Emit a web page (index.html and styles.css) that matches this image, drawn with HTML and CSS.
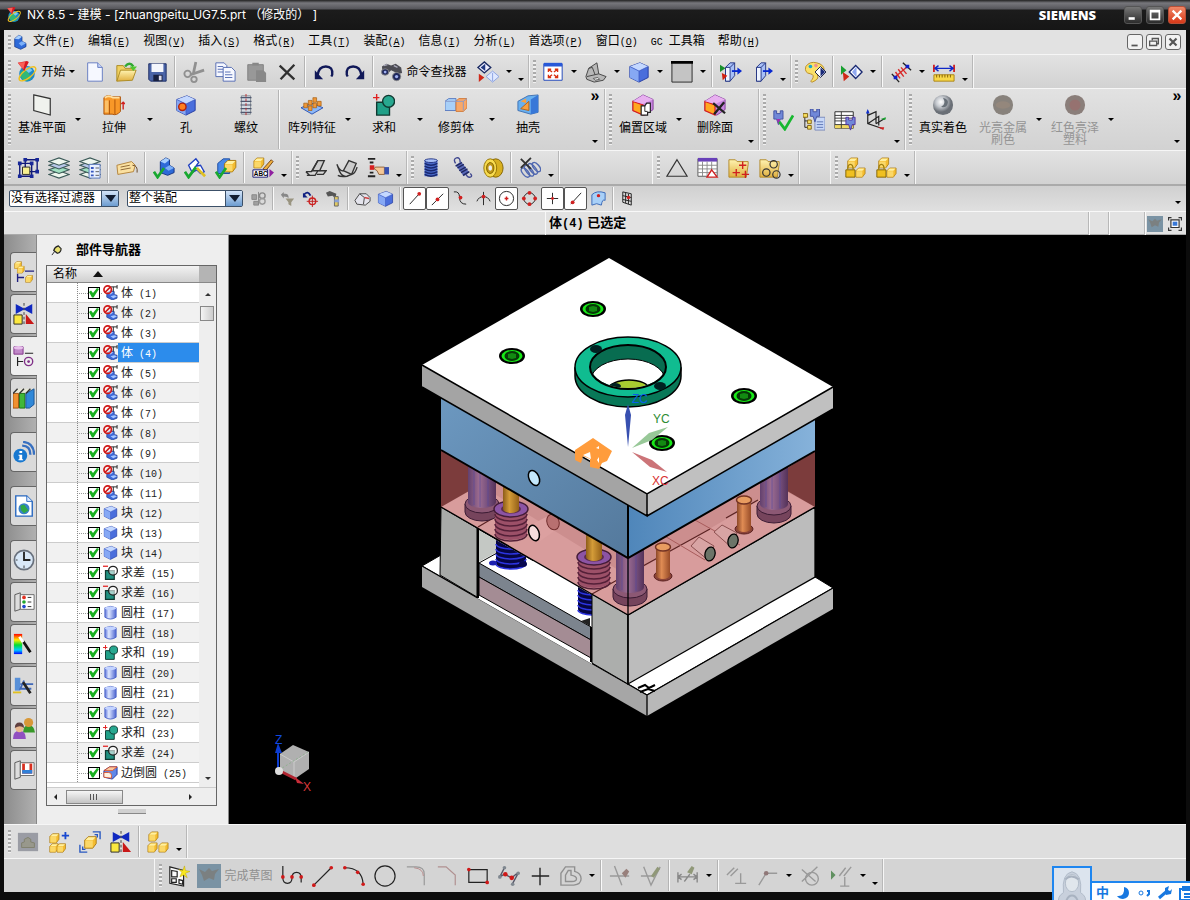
FILE: index.html
```html
<!DOCTYPE html>
<html lang="zh-CN">
<head>
  <meta charset="UTF-8">
  <title>NX 8.5 - 建模</title>
  <meta name="viewport" content="width=device-width, initial-scale=1">
  <link rel="stylesheet" href="styles.css">
</head>
<body>
  <!-- icon sprite -->
  <svg class="sprite" aria-hidden="true">
    <defs>
      <linearGradient id="gBlue" x2="1" y2="1"><stop stop-color="#c8dcff"/><stop offset="1" stop-color="#3c62d8"/></linearGradient>
      <linearGradient id="gCyl"><stop stop-color="#5a72dc"/><stop offset=".35" stop-color="#dfe8ff"/><stop offset="1" stop-color="#4a62d0"/></linearGradient>
      <linearGradient id="gFold" x2="0" y2="1"><stop stop-color="#fff3b0"/><stop offset="1" stop-color="#e0b040"/></linearGradient>
      <radialGradient id="gBall" cx=".4" cy=".35"><stop stop-color="#fff"/><stop offset=".5" stop-color="#c4c8ce"/><stop offset="1" stop-color="#6a6f76"/></radialGradient>
      <linearGradient id="gRain" x2="0" y2="1"><stop stop-color="#f00"/><stop offset=".3" stop-color="#fe0"/><stop offset=".55" stop-color="#0d3"/><stop offset=".8" stop-color="#0cf"/><stop offset="1" stop-color="#00f"/></linearGradient>
    </defs>
    <symbol id="cy" viewBox="0 0 12 12"><path d="M1 4 4 1h7v6L8 11H1z" fill="#f4bc30" stroke="#a87810" stroke-width=".8"/><path d="M1.500 4 4 1.500h6.500L8 4z" fill="#fff0a0"/><path d="M1.500 4.500H8v6H1.500z" fill="#fbd868"/></symbol>
    <symbol id="cb" viewBox="0 0 24 24"><path d="M2 6 13 2l9 4v12l-10 5-10-5z" fill="#4a6edc" stroke="#2038a0"/><path d="M2 6 13 2l9 4-10 5z" fill="#c4d8ff"/><path d="M2 6l10 5v12L2 18z" fill="#86a8f4"/><path d="M2 6l10 5 10-5M12 11v12" fill="none" stroke="#3a56c0" stroke-width=".8"/></symbol>
    <symbol id="nx" viewBox="0 0 24 24"><circle cx="12" cy="14" r="8.500" fill="#1c8ac8"/><path d="M5 12q5-4 8 0t3 8q-8 4-11-3z" fill="#30b878"/><path d="M8 8q6-3 10 2l-4 3z" fill="#7ac8f0"/><ellipse cx="12.500" cy="14" rx="11" ry="4.500" fill="none" stroke="#f0c020" stroke-width="1.500" transform="rotate(-38 12.500 14)"/><path d="M2 2l10-2 2 1-5 10z" fill="#d81820"/><path d="M2 2l8-1-2 8z" fill="#f86058"/></symbol>
    <symbol id="part" viewBox="0 0 24 24"><path d="M4 7 10 2l5 2v7l6 3v5l-8 4-9-4z" fill="#2e6ad8" stroke="#103080"/><path d="M4 7l6-5 5 2-5 4z" fill="#a8d0ff"/><path d="M10 14l5-3 6 3-7 4z" fill="#7cb0f8"/></symbol>
    <symbol id="new" viewBox="0 0 24 24"><path d="M4 2h11l5 5v15H4z" fill="#f6f8ff" stroke="#6078c0"/><path d="M15 2v5h5" fill="#c8d4f8" stroke="#6078c0"/></symbol>
    <symbol id="open" viewBox="0 0 24 24"><path d="M2 22V5h7l2 3h9v4" fill="#f0d060" stroke="#a88820"/><path d="M2 22l4-12h17l-4 11z" fill="url(#gFold)" stroke="#a88820"/><path d="M11 6q5-6 9 0" fill="none" stroke="#30a830" stroke-width="2.500"/><path d="M16 6h8l-4 5z" fill="#50c830"/></symbol>
    <symbol id="save" viewBox="0 0 24 24"><path d="M3 3h19v19H5l-2-2z" fill="#4a64a8" stroke="#1a2a60"/><path d="M6 3h13v9H6z" fill="#f4f6fc"/><path d="M8 15h10v7H8z" fill="#182040"/><path d="M14 16h3v5h-3z" fill="#dde"/></symbol>
    <symbol id="cut" viewBox="0 0 24 24"><g fill="none" stroke="#909090" stroke-width="2"><path d="M14 1l-3 14M23 10 8 15" stroke-width="3"/><circle cx="5" cy="14" r="3.500"/><circle cx="12" cy="20" r="3"/></g></symbol>
    <symbol id="copy" viewBox="0 0 24 24"><g fill="#f6f8ff" stroke="#5068b0"><path d="M2 2h9l3 3v12H2z"/><path d="M4 6h6m-6 3h8m-8 3h8"/><path d="M10 7h9l4 4v11H10z"/><path d="M12 12h6m-6 3h8m-8 3h8"/></g></symbol>
    <symbol id="paste" viewBox="0 0 24 24"><path d="M3 4h17v17H3z" fill="#989898" stroke="#808080"/><path d="M8 5V2h7v3zM12 10h8l3 3v10H12z" fill="#888"/></symbol>
    <symbol id="del" viewBox="0 0 24 24"><path d="M4 5l16 15M20 4 5 20" stroke="#303030" stroke-width="2.500"/></symbol>
    <symbol id="undo" viewBox="0 0 24 24"><path d="M5 16Q6 6 14 6t7 9l-1 2" fill="none" stroke="#101858" stroke-width="2.500"/><path d="M2 10v10h9z" fill="#101858"/></symbol>
    <symbol id="redo" viewBox="0 0 24 24"><path d="M19 16Q18 6 10 6t-7 9l1 2" fill="none" stroke="#101858" stroke-width="2.500"/><path d="M22 10v10h-9z" fill="#101858"/></symbol>
    <symbol id="find" viewBox="0 0 24 24"><path d="M1 6l5-3 5 2 5-2 6 4 1 6-3 1-5-2-4-2-3 3-6 1z" fill="#4c4c54"/><path d="M3 5l4-1M14 5l4 2" stroke="#aab" stroke-width="1.500"/><ellipse cx="4.500" cy="12" rx="4" ry="3.500" fill="#20285c" stroke="#888"/><circle cx="17" cy="17" r="4.500" fill="#20285c" stroke="#888"/><circle cx="17" cy="17" r="1.800" fill="#a0b0f0"/><circle cx="4.500" cy="12" r="1.500" fill="#a0b0f0"/></symbol>
    <symbol id="diam" viewBox="0 0 24 24"><path d="M1 7l7-6 7 6-7 6z" fill="#eef" stroke="#182860" stroke-width="1.500"/><path d="M9 3v8L4 7z" fill="#203880"/><path d="M2 14v9l6-5z" fill="#d02818"/><path d="M10 17l7-6 7 6-7 6z" fill="#dfe8ff" stroke="#88a0e0"/><path d="M17 13v9" stroke="#88a0e0"/></symbol>
    <symbol id="fit" viewBox="0 0 24 24"><path d="M2 3h20v18H2z" fill="#fff" stroke="#1840b8"/><path d="M2 2h20v4H2z" fill="#2858d8"/><path d="M7 12V9h3M14 9h3v3M7 15v3h3M17 15v3h-3M7 9l4 3M17 9l-4 3M7 18l4-3M17 18l-4-3" fill="none" stroke="#d83010" stroke-width="1.500"/></symbol>
    <symbol id="wire" viewBox="0 0 24 24"><path d="M1 17 4 8l9-6 2 12 8 3-3 4-10 2-8-3z" fill="#b8b8b8" stroke="#404040"/><path d="M2 17l13-3M4 8l4-1 3 8" fill="none" stroke="#404040"/><path d="M9 19l5-1 2 2-5 1z" fill="#eee" stroke="#555"/></symbol>
    <symbol id="box" viewBox="0 0 24 24"><path d="M1 1h22v22H1z" fill="#c4c4c4" stroke="#222"/><path d="M0 0h24v3H0z" fill="#000"/></symbol>
    <symbol id="exit1" viewBox="0 0 24 24"><path d="M6 7l5-5h5v14l-5 6H6z" fill="#a8c0f8" stroke="#203080"/><path d="M6 7h5v15H6z" fill="#eef4ff" stroke="#203080"/><path d="M11 7l5-5" stroke="#203080"/><path d="M13 11h7" stroke="#0828d0" stroke-width="2"/><path d="M19 7l5 4-5 4z" fill="#0828d0"/></symbol>
    <symbol id="exit2" viewBox="0 0 24 24"><use href="#exit1"/><path d="M0 4l6 4-6 4z" fill="#18902c"/><path d="M2 13l6 3-5 5z" fill="#d02010"/></symbol>
    <symbol id="palette" viewBox="0 0 24 24"><path d="M2 6q4-6 12-4t8 8q-2 4-7 3-1 1 0 4t-6 6q-3 0 0-3 3-5-2-6Q0 13 2 6z" fill="#fae068" stroke="#b88820"/><circle cx="7" cy="6" r="2" fill="#18a8d0"/><circle cx="13" cy="5" r="2" fill="#f09090"/><path d="M12 12l6-6 6 6-6 6z" fill="#fff" stroke="#101840"/><path d="M18 7v10l5-5z" fill="#182878"/></symbol>
    <symbol id="play" viewBox="0 0 24 24"><path d="M0 5l6 5-6 5z" fill="#18a030"/><path d="M2 12l7 5-6 5z" fill="#d02818"/><path d="M9 12l7-7 7 7-7 7z" fill="#fff" stroke="#182870" stroke-width="1.500"/><path d="M17 6v12l-5-6z" fill="#90a8f0"/></symbol>
    <symbol id="meas" viewBox="0 0 24 24"><path d="M2 14l8 9M14 2l9 8" stroke="#222" stroke-width="1.500"/><path d="M5 18 19 6M6 12l5 7M9 9l6 8M12 7l6 7" stroke="#d82828" stroke-width="1.500"/><path d="M4 16h4v4H4zM17 4h4v4h-4z" fill="#1020c8"/></symbol>
    <symbol id="ruler" viewBox="0 0 24 24"><path d="M1 4v8M23 4v8" stroke="#d02020" stroke-width="2"/><path d="M2 8h20M6 5 2 8l4 3M18 5l4 3-4 3" fill="none" stroke="#1028c8" stroke-width="1.500"/><path d="M1 15h22v7H1z" fill="#f8d848" stroke="#a88010"/><path d="M4 15v3m3-3v3m3-3v3m3-3v3m3-3v3m3-3v3" stroke="#805c00"/></symbol>
    <!-- feature row -->
    <symbol id="plane" viewBox="0 0 24 24"><path d="M3 1l18 4v18L3 18z" fill="#f0f2ee" stroke="#333" stroke-width="1.300"/></symbol>
    <symbol id="extr" viewBox="0 0 24 24"><path d="M1 4q4-4 9-1h9v16q-4 5-9 3H1z" fill="#f89828" stroke="#a85008"/><path d="M7 7v15M13 6v16" stroke="#a85008"/><path d="M2 4q4-3 9 0h7" fill="none" stroke="#ffe0a0" stroke-width="2"/><path d="M2 7h4v13H2z" fill="#fcc068"/><path d="M22 9v8m-2-6 2-2 2 2" fill="none" stroke="#d02020" stroke-width="1.500"/></symbol>
    <symbol id="hole" viewBox="0 0 24 24"><use href="#cb"/><circle cx="8" cy="14" r="4" fill="#ff8020" stroke="#b02010" stroke-width="1.500"/></symbol>
    <symbol id="thread" viewBox="0 0 24 24"><path d="M7 2h10v20H7z" fill="#d4dce4" stroke="#808890"/><path d="M6 4h12M6 8h12M6 12h12M6 16h12M6 20h12" stroke="#505870" stroke-width="1.200"/><path d="M12 0v24" stroke="#c02828" stroke-dasharray="3 2"/></symbol>
    <symbol id="array" viewBox="0 0 24 24"><path d="M0 15l12-5 12 5-12 7z" fill="#8cb8f8" stroke="#2850b0"/><g fill="#f09838" stroke="#a05808" stroke-width=".7"><path d="M3 10h4v5H3zM8 7h4v5H8zM13 4h4v5h-4zM8 13h4v5H8zM13 10h4v5h-4zM18 8h4v5h-4z"/></g></symbol>
    <symbol id="unite" viewBox="0 0 24 24"><path d="M4 9h14v14H4z" fill="#20a088" stroke="#103830" stroke-width="1.500"/><circle cx="17" cy="8" r="6.500" fill="#28a890" stroke="#103830" stroke-width="1.500"/><path d="M4 0v7M0 4h7" stroke="#e02020" stroke-width="1.500"/></symbol>
    <symbol id="sub" viewBox="0 0 24 24"><path d="M4 9h14v14H4z" fill="#209080" stroke="#103830" stroke-width="2"/><circle cx="16" cy="9" r="7" fill="#fff" fill-opacity=".6" stroke="#222" stroke-width="2"/><path d="M0 2h8" stroke="#e02020" stroke-width="2"/></symbol>
    <symbol id="trim" viewBox="0 0 24 24"><path d="M0 8l4-3h8v13H0z" fill="#a8d0f8" stroke="#5878c0"/><path d="M12 8l3-3h9v10l-4 4h-8z" fill="#f8a868" stroke="#d07838"/><path d="M0 8h20v10M20 8l4-3" fill="none" stroke="#8898c8"/></symbol>
    <symbol id="shell" viewBox="0 0 24 24"><path d="M1 8 12 2l11-1v19l-8 2-14-4z" fill="#68b0f0" stroke="#4070b0"/><path d="M4 16l9-8v10z" fill="#f8a040" stroke="#b06018"/><path d="M15 6l8-5v19l-8 2z" fill="#3878d8"/><path d="M4 8l6-3v5z" fill="#f8a040"/></symbol>
    <symbol id="face" viewBox="0 0 24 24"><path d="M1 8l11-7 11 5v11l-9 6-13-5z" fill="#c888e0" stroke="#803898"/><path d="M1 8l11 4v11L1 18z" fill="#ffa820" stroke="#d82020" stroke-width="1.300"/><path d="M1 8l11-7 11 5-11 5z" fill="#e8b0f0"/></symbol>
    <symbol id="offset" viewBox="0 0 24 24"><use href="#face"/><path d="M10 13h4l2-3h4v10h-3v3h-7z" fill="#fff" stroke="#222" stroke-width="1.300"/><path d="M14 13v6h3" fill="none" stroke="#222"/></symbol>
    <symbol id="delface" viewBox="0 0 24 24"><use href="#face"/><path d="M10 10l13 11M22 9 11 22" stroke="#222" stroke-width="2.500"/></symbol>
    <symbol id="pmi1" viewBox="0 0 24 24"><path d="M2 2h3v3h4V2h3v9H9l-2 6-2-6H2z" fill="#7088d8" stroke="#4050a0"/><path d="M5 11h4l-2 6z" fill="#a030b0"/><path d="M8 14l6 8 9-15" fill="none" stroke="#18b830" stroke-width="3"/></symbol>
    <symbol id="pmi2" viewBox="0 0 24 24"><path d="M13 9h11v14H13z" fill="#c8d8f8" stroke="#7888b8"/><path d="M15 14h7m-7 3h7m-7 3h7" stroke="#5870b0"/><path d="M2 7v13h5M2 13h5" fill="none" stroke="#222"/><path d="M0 5h5v4H0zM5 12h4v4H5zM5 18h4v4H5z" fill="#f8e060" stroke="#806010"/><path d="M8 0h3v3h4V0h3v8h-3l-2 6-2-6H8z" fill="#7088d8" stroke="#4050a0"/></symbol>
    <symbol id="pmi3" viewBox="0 0 24 24"><path d="M1 3h20v18H1z" fill="#fff" stroke="#222"/><path d="M1 17h20v4H1z" fill="#f0d860"/><path d="M1 7h20M1 10h20M1 13h20M1 17h20M8 3v18" stroke="#333"/><path d="M13 9h3v3h4V9h3v8h-3l-2 6-2-6h-3z" fill="#7088d8" stroke="#5030a0"/></symbol>
    <symbol id="csys" viewBox="0 0 24 24"><path d="M3 2v14l15 5M3 7l9-4v13M3 16l12-8v10M12 16l10-6" fill="none" stroke="#222" stroke-width="1.300"/><path d="M3 0l2 5H1z" fill="#1030d0"/><path d="M17 11l6-2-1 3z" fill="#18a830"/><path d="M14 20l6 3 1-3z" fill="#d02020"/></symbol>
    <symbol id="ball" viewBox="0 0 24 24"><circle cx="12" cy="12" r="11" fill="url(#gBall)"/><path d="M12 4q7 2 5 7t-7 3q6-3 2-10z" fill="#687078"/></symbol>
    <symbol id="ball2" viewBox="0 0 24 24"><circle cx="12" cy="12" r="11" fill="#88827c"/><ellipse cx="12" cy="12" rx="8" ry="4" fill="#94877c"/></symbol>
    <symbol id="ball3" viewBox="0 0 24 24"><circle cx="12" cy="12" r="11" fill="#8a7e7a"/><circle cx="12" cy="12" r="6" fill="#967270"/></symbol>
    <!-- third row -->
    <symbol id="wcs" viewBox="0 0 24 24"><path d="M3 7h13v14H3zM9 3h13v13H9z" fill="none" stroke="#101878" stroke-width="1.500"/><path d="M6 11h8v8H6z" fill="#f8f090" stroke="#222"/><path d="M1 5h4v4H1zM14 5h4v4h-4zM1 19h4v4H1zM14 19h4v4h-4zM20 1h4v4h-4zM7 1h4v4H7zM20 14h4v4h-4z" fill="#182898"/></symbol>
    <symbol id="layers" viewBox="0 0 24 24"><g fill="#eef6ee" stroke="#3c5a58" stroke-width="1.200"><path d="M1 19l11-4 11 4-11 4z"/><path d="M1 14l11-4 11 4-11 4z" fill="#a0e0c0"/><path d="M1 9l11-4 11 4-11 4z" fill="#b8c8e8"/><path d="M1 5l11-4 11 4-11 4z"/></g></symbol>
    <symbol id="layset" viewBox="0 0 24 24"><use href="#layers"/><path d="M11 8h12v15H11z" fill="#e8f0ff" stroke="#5070b8"/><path d="M13 11h3v2h-3zM13 15h3v2h-3zM13 19h3v2h-3z" fill="#3858c0"/><path d="M18 12h4m-4 4h4m-4 4h4" stroke="#555"/></symbol>
    <symbol id="tag" viewBox="0 0 24 24"><path d="M1 9l16-4 4 4-2 7-17 3z" fill="#fae0a0" stroke="#b08038"/><path d="M5 11l10-2M5 14l11-2" stroke="#886030"/><path d="M18 9q6 0 5 8" fill="none" stroke="#604020"/></symbol>
    <symbol id="chk1" viewBox="0 0 24 24"><path d="M8 5l6-4 4 2v6l5 3v5l-7 3-8-3z" fill="#2e6ad8" stroke="#103080"/><path d="M8 5l6-4 4 2-5 4z" fill="#a8d0ff"/><path d="M13 12l5-3 5 3-6 3z" fill="#7cb0f8"/><path d="M1 16l4 6 7-10" fill="none" stroke="#18a830" stroke-width="3"/></symbol>
    <symbol id="chk2" viewBox="0 0 24 24"><path d="M5 9l8-7 3 4-3 4 5-1 4 7-4 2-4-4-5 3z" fill="#fff" stroke="#2040c0" stroke-width="1.500"/><path d="M14 12l9 9" stroke="#e0c020" stroke-width="3"/><path d="M1 16l4 6 8-11" fill="none" stroke="#18a830" stroke-width="3"/></symbol>
    <symbol id="chk3" viewBox="0 0 24 24"><path d="M3 7l6-5h7v16H3z" fill="#4888e8" stroke="#1848a0"/><use href="#cy" x="9" y="2" width="15" height="16"/><path d="M1 16l4 6 7-10" fill="none" stroke="#18a830" stroke-width="3"/></symbol>
    <symbol id="bend1" viewBox="0 0 24 24"><path d="M8 15l6-11h7l-5 11z" fill="#ccc" stroke="#333" stroke-width="1.500"/><path d="M1 16h6l7-12M2 20h9l3-5M1 16l4 4M16 15h7l-3 4h-7" fill="none" stroke="#333" stroke-width="1.500"/></symbol>
    <symbol id="bend2" viewBox="0 0 24 24"><path d="M8 15l6-11 8 3-5 12z" fill="#ccc" stroke="#333" stroke-width="1.500"/><path d="M1 8q3 8 7 7M1 8l3 8q3 6 8 5l5-2q4-1 6-8M2 20q3 2 10 1" fill="none" stroke="#333" stroke-width="1.500"/></symbol>
    <symbol id="hand" viewBox="0 0 24 24"><path d="M1 2h8M3 6h4M1 21h8M3 17h4" stroke="#222" stroke-width="2"/><path d="M3 9h5v5H3z" fill="#d82020"/><path d="M9 11h10v8h-6l-2-4-3-2z" fill="#f4c898" stroke="#906038"/><path d="M19 11h5v8h-5z" fill="#3850b0"/></symbol>
    <symbol id="spring1" viewBox="0 0 24 24"><path d="M5 4h14v17H5z" fill="#4868c8"/><ellipse cx="12" cy="4" rx="7" ry="2" fill="#a8c0f8" stroke="#203080"/><path d="M5 7q7 4 14 0M5 10q7 4 14 0M5 13q7 4 14 0M5 16q7 4 14 0M5 19q7 4 14 0" fill="none" stroke="#182870" stroke-width="1.500"/></symbol>
    <symbol id="spring2" viewBox="0 0 24 24"><path d="M5 7Q2 2 6 1t4 5M16 18q2 5 5 4t0-4" fill="none" stroke="#404890" stroke-width="1.500"/><path d="M5 9l6-4 9 12-6 4z" fill="#5868b8"/><path d="M5 10l7-4M7 12l7-4M9 15l7-4M11 17l7-4M13 20l7-4" stroke="#202860" stroke-width="1.500"/></symbol>
    <symbol id="spring3" viewBox="0 0 24 24"><ellipse cx="15" cy="12" rx="8" ry="10" fill="#d8b020" stroke="#806000"/><ellipse cx="9" cy="12" rx="7" ry="10" fill="#f8dc50" stroke="#907000"/><ellipse cx="9" cy="12" rx="4" ry="6" fill="#c09818" stroke="#806000"/><ellipse cx="9" cy="12" rx="2" ry="3" fill="#eee"/></symbol>
    <symbol id="spring4" viewBox="0 0 24 24"><g fill="none" stroke="#5068b0" stroke-width="1.500"><ellipse cx="7" cy="17" rx="3" ry="6" transform="rotate(-40 7 17)"/><ellipse cx="11" cy="15" rx="3" ry="7" transform="rotate(-40 11 15)"/><ellipse cx="15" cy="13" rx="3" ry="7" transform="rotate(-40 15 13)"/><ellipse cx="19" cy="11" rx="3" ry="6" transform="rotate(-40 19 11)"/></g><path d="M2 2l11 11M13 1 2 12" stroke="#333" stroke-width="2"/></symbol>
    <symbol id="tri" viewBox="0 0 24 24"><path d="M12 3l11 18H1z" fill="none" stroke="#333" stroke-width="1.300"/></symbol>
    <symbol id="table" viewBox="0 0 24 24"><path d="M1 2h21v19H1z" fill="#fff" stroke="#555"/><path d="M1 1h21v4H1z" fill="#6840b8"/><path d="M1 9h21M1 13h21M1 17h21M6 5v16M11 5v16M16 5v16" stroke="#888"/><path d="M16 14l6 8H11z" fill="#fff" stroke="#d02020" stroke-width="1.500"/></symbol>
    <symbol id="fold" viewBox="0 0 24 24"><path d="M1 3h7l2 2h12v3l-2 14H1z" fill="url(#gFold)" stroke="#b08828"/></symbol>
    <symbol id="fold1" viewBox="0 0 24 24"><use href="#fold"/><path d="M16 5v8M12 9h8M9 13v8M5 17h8M19 15v8M15 19h8" stroke="#d02020" stroke-width="1.500"/></symbol>
    <symbol id="fold2" viewBox="0 0 24 24"><use href="#fold"/><g fill="none" stroke="#333" stroke-width="1.300"><circle cx="16" cy="8" r="4"/><circle cx="8" cy="17" r="4"/><circle cx="19" cy="19" r="4"/></g></symbol>
    <symbol id="asm" viewBox="0 0 24 24"><use href="#cy" x="3" y="0" width="13" height="13"/><use href="#cy" x="12" y="11" width="12" height="12"/><path d="M2 14h10v8H2z" fill="#f0c020" stroke="#806000"/><path d="M4 14q0-6 3-6t3 6" fill="none" stroke="#a08010" stroke-width="1.500"/></symbol>
    <!-- selection bar, 18px grid -->
    <symbol id="s-asm" viewBox="0 0 18 18"><path d="M2 5h5v5H2zM4 12h5v4H4zM9 2v14" fill="#a0a0a0" stroke="#888"/><circle cx="13" cy="6" r="3" fill="none" stroke="#888" stroke-width="1.500"/><circle cx="13" cy="12" r="3" fill="none" stroke="#999" stroke-width="1.500"/></symbol>
    <symbol id="s-filt" viewBox="0 0 18 18"><path d="M2 5l3-3v2q6-1 5 5-1-2-5-2v2z" fill="#888"/><path d="M7 9h9l-3 4v4l-3-2v-2z" fill="#999480"/></symbol>
    <symbol id="s-snap" viewBox="0 0 18 18"><path d="M2 5q4-5 7 1" fill="none" stroke="#102080" stroke-width="2"/><path d="M1 3v5h5z" fill="#102080"/><circle cx="11" cy="12" r="3.500" fill="none" stroke="#d02020" stroke-width="1.500"/><path d="M11 6v12M5 12h12" stroke="#c02020"/></symbol>
    <symbol id="s-find" viewBox="0 0 18 18"><path d="M1 3l4-2 7 3-1 5-3-3-5 1z" fill="#555"/><path d="M10 7h4v10h-4z" fill="#e0c860" stroke="#666"/><path d="M10 10h5v3h-5z" fill="#88a0d8"/></symbol>
    <symbol id="s-solid" viewBox="0 0 18 18"><path d="M1 11 6 4h7l4 4v4l-5 4-9-1z" fill="#e4e4ec" stroke="#444"/><path d="M6 4l5 4-1 7" fill="none" stroke="#444"/><path d="M11 8l5 1" stroke="#d04040" stroke-width="1.500"/></symbol>
    <symbol id="s-end" viewBox="0 0 18 18"><path d="M4 15 14 4" stroke="#222"/><circle cx="14" cy="4" r="2" fill="#d02020"/></symbol>
    <symbol id="s-mid" viewBox="0 0 18 18"><path d="M3 16 15 4" stroke="#222"/><circle cx="9" cy="10" r="2" fill="#d02020"/></symbol>
    <symbol id="s-ctl" viewBox="0 0 18 18"><path d="M2 2q6-1 6 6t7 7" fill="none" stroke="#222"/><circle cx="9" cy="8" r="2" fill="#d02020"/></symbol>
    <symbol id="s-int" viewBox="0 0 18 18"><path d="M9 2v14M2 12q2-5 7-5t7 5" fill="none" stroke="#222"/><circle cx="9" cy="7" r="2" fill="#d02020"/></symbol>
    <symbol id="s-cen" viewBox="0 0 18 18"><circle cx="9" cy="9" r="7.500" fill="none" stroke="#222"/><path d="M7 9h4M9 7v4" stroke="#d02020" stroke-width="1.500"/></symbol>
    <symbol id="s-quad" viewBox="0 0 18 18"><circle cx="9" cy="9" r="6" fill="none" stroke="#222"/><g fill="#d02020"><circle cx="9" cy="3" r="2"/><circle cx="9" cy="15" r="2"/><circle cx="3" cy="9" r="2"/><circle cx="15" cy="9" r="2"/></g></symbol>
    <symbol id="s-pt" viewBox="0 0 18 18"><path d="M9 3v12M3 9h12" stroke="#222"/><circle cx="9" cy="9" r="1.500" fill="#d02020"/></symbol>
    <symbol id="s-near" viewBox="0 0 18 18"><path d="M4 15 15 3" stroke="#222"/><circle cx="6" cy="13" r="2" fill="#d02020"/></symbol>
    <symbol id="s-surf" viewBox="0 0 18 18"><path d="M2 5q5-5 14-2v8q-3-2-4 5-5-3-10 0z" fill="#a8d0f8" stroke="#3868b8"/><circle cx="9" cy="6" r="1.800" fill="#d02020"/></symbol>
    <symbol id="s-grid" viewBox="0 0 18 18"><path d="M4 2l9 2v12l-9-3zM4 6l9 2M4 10l9 2M7 3v11M10 4v11" fill="none" stroke="#222"/><circle cx="10" cy="8" r="1.800" fill="#d02020"/></symbol>
    <!-- navigation tabs and tree -->
    <symbol id="t-asm" viewBox="0 0 24 24"><use href="#cy" x="1" y="0" width="9" height="9"/><use href="#cy" x="4" y="5" width="9" height="9"/><use href="#cy" x="13" y="15" width="9" height="9"/><path d="M13 11h10M5 14v9M5 18h7" fill="none" stroke="#202080" stroke-width="1.500"/></symbol>
    <symbol id="mirror" viewBox="0 0 24 24"><path d="M3 1l9 5 9-5v11l-9-5-9 5z" fill="#1028c0"/><path d="M1 13h9v10H1z" fill="#fce840" stroke="#222"/><path d="M14 12v11h9z" fill="#c81818"/><path d="M12 0v24" stroke="#333" stroke-dasharray="3 2"/></symbol>
    <symbol id="t-part" viewBox="0 0 24 24"><path d="M1 2h10v8H1z" fill="#c088c8" stroke="#803088"/><ellipse cx="6" cy="3" rx="5" ry="1.800" fill="#e8c0ec"/><path d="M13 9h9M5 13v10M5 18h6" stroke="#222" stroke-width="1.300"/><circle cx="17" cy="18" r="4.500" fill="none" stroke="#803088" stroke-width="1.500"/><circle cx="17" cy="18" r="1.500" fill="#803088"/></symbol>
    <symbol id="t-books" viewBox="0 0 24 24"><path d="M0 7l6-5h18v16l-7 5H0z" fill="#e8e8d8"/><path d="M0 7h6v16H0z" fill="#f09030" stroke="#a05010"/><path d="M7 7h6v16H7z" fill="#40b838" stroke="#187010"/><path d="M14 7l9-5v17l-5 4h-4z" fill="#3088d8" stroke="#185090"/><path d="M0 7l5-5M7 7l5-5M14 7l5-5" stroke="#333" stroke-width="1.500"/></symbol>
    <symbol id="t-web" viewBox="0 0 24 24"><path d="M3 1h12l6 6v16H3z" fill="#fff" stroke="#2868c0" stroke-width="1.500"/><path d="M15 1v6h6" fill="#d8e8ff" stroke="#2868c0"/><circle cx="12" cy="15" r="6" fill="#3880c8"/><path d="M8 12q5-3 6 1l3 4-5 3-3-3z" fill="#30a848"/></symbol>
    <symbol id="t-clock" viewBox="0 0 24 24"><circle cx="12" cy="12" r="10.500" fill="#d8e8f8" stroke="#68707c" stroke-width="1.800"/><path d="M12 3v9h7" fill="none" stroke="#222" stroke-width="2"/><path d="M12 18v3M3 12h2" stroke="#333"/></symbol>
    <symbol id="t-role" viewBox="0 0 24 24"><path d="M2 4l6-2v18l-6 2z" fill="#ddd" stroke="#555"/><path d="M8 4h15v16H8z" fill="#fff" stroke="#666"/><circle cx="12" cy="7" r="2" fill="#e03020"/><circle cx="12" cy="12" r="2" fill="#20a830"/><circle cx="12" cy="17" r="2" fill="#2048d0"/><path d="M16 7h4M16 12h4M16 17h4" stroke="#222"/></symbol>
    <symbol id="t-rain" viewBox="0 0 24 24"><path d="M1 1h9v22H1z" fill="url(#gRain)"/><path d="M11 9l8 12" stroke="#111" stroke-width="3"/><path d="M7 4l4 6" stroke="#fff" stroke-width="3"/></symbol>
    <symbol id="t-proc" viewBox="0 0 24 24"><path d="M2 3h6v14H2z" fill="#5890d8"/><path d="M0 19h9" stroke="#e0c020" stroke-width="2"/><path d="M8 10h14M12 6l-4 9h12" fill="none" stroke="#4068b8" stroke-width="2"/><path d="M11 8l8 12" stroke="#222" stroke-width="3"/></symbol>
    <symbol id="t-users" viewBox="0 0 24 24"><path d="M11 17q0-8 6-8t7 8z" fill="#389828"/><circle cx="17" cy="6" r="5" fill="#d89838"/><path d="M0 24q0-9 7-9t7 9z" fill="#9050c0"/><circle cx="7" cy="12" r="4.500" fill="#e8b890"/><path d="M2 12q0-6 5-6t5 6q-4-4-10 0z" fill="#604040"/></symbol>
    <symbol id="t-show" viewBox="0 0 24 24"><path d="M2 4l6-2v18l-6 2z" fill="#ddd" stroke="#555"/><path d="M8 4h15v14H8z" fill="#fff" stroke="#666"/><path d="M10 5h11v11H10z" fill="#d83020"/><path d="M13 5h5v7h-5z" fill="#fff"/><path d="M10 12h11v4H10z" fill="#3080d8"/></symbol>
    <symbol id="n-body" viewBox="0 0 16 16"><path d="M4 9l4-3 4 1v3l3 1v3l-5 2-6-3z" fill="#3c68d8" stroke="#203c90" stroke-width=".7"/><path d="M5 9l3-2 3 1-3 2zM8 12l4-1 3 1-4 2z" fill="#a8c8ff"/><path d="M8 2h7M11 2v5M15 0v4" stroke="#222"/><circle cx="5" cy="5" r="4" fill="#fff" fill-opacity=".4" stroke="#d01818" stroke-width="1.800"/><path d="M2 8l6-6" stroke="#d01818" stroke-width="1.800"/></symbol>
    <symbol id="n-cyl" viewBox="0 0 16 16"><path d="M2 3q6-3 12 0v10q-6 4-12 0z" fill="url(#gCyl)" stroke="#5068c8"/><ellipse cx="8" cy="3.500" rx="6" ry="2" fill="#c4d4ff"/></symbol>
    <symbol id="n-blend" viewBox="0 0 16 16"><path d="M1 6l6-4h8v8l-5 5-9-2z" fill="#6088e8" stroke="#2038a0"/><path d="M1 6l6-4h8l-5 4z" fill="#f8c8a0" stroke="#e04010" stroke-width=".8"/><path d="M1 8h5q3 0 3 3v3l-8-1z" fill="#fff0e0" stroke="#e04010" stroke-width=".8"/></symbol>
    <!-- bottom toolbars -->
    <symbol id="dis" viewBox="0 0 24 24"><path d="M1 2h22v20H1z" fill="#9a9ca4"/><path d="M5 18v-5l3-1V9l4-2 3 2v3l4 1v5z" fill="#98988c" stroke="#80806c"/></symbol>
    <symbol id="addc" viewBox="0 0 24 24"><use href="#cy" x="1" y="2" width="12" height="12"/><use href="#cy" x="1" y="13" width="11" height="11"/><use href="#cy" x="9" y="13" width="11" height="11"/><path d="M19 1v8M15 5h8" stroke="#1848d0" stroke-width="2"/></symbol>
    <symbol id="movec" viewBox="0 0 24 24"><use href="#cy" x="5" y="5" width="15" height="15"/><path d="M15 1h8v8M17 4h3v3M1 15v8h8M4 17v3h3" fill="none" stroke="#2858c0" stroke-width="1.500"/></symbol>
    <symbol id="cubes" viewBox="0 0 24 24"><use href="#cy" x="1" y="0" width="12" height="12"/><use href="#cy" x="0" y="12" width="12" height="12"/><use href="#cy" x="12" y="12" width="12" height="12"/></symbol>
    <symbol id="sk" viewBox="0 0 24 24"><path d="M2 2l15 4v17L2 20zM4 6l6 1v6H4zM4 15h5v4H4zM12 16l4 1v4l-4-1z" fill="#fafafa" stroke="#222" stroke-width="1.300"/><path d="M18 1l1 5 5 1-5 2 2 5-4-3-4 2 2-5-3-3 4 1z" fill="#f8e820" stroke="#b8a000" stroke-width=".5"/></symbol>
    <symbol id="fin" viewBox="0 0 24 24"><path d="M0 0h24v24H0z" fill="#7a93a4"/><path d="M2 5l6 3 4-4 3 3 7-2-4 5-1 6-5-2-5 3-2-6z" fill="#7c7c78" opacity=".8"/></symbol>
    <symbol id="prof" viewBox="0 0 24 24"><path d="M2 1v13q0 6 5 6t5-6 5-6 5 6v5" fill="none" stroke="#222" stroke-width="1.300"/><circle cx="2" cy="13" r="2" fill="#d01818"/><circle cx="12" cy="13" r="2" fill="#d01818"/><circle cx="22" cy="13" r="2" fill="#d01818"/></symbol>
    <symbol id="line" viewBox="0 0 24 24"><path d="M2 22 21 3" stroke="#222" stroke-width="1.300"/><circle cx="2" cy="22" r="2" fill="#d01818"/><circle cx="21" cy="3" r="2" fill="#d01818"/></symbol>
    <symbol id="arc" viewBox="0 0 24 24"><path d="M2 3q19 0 20 18" fill="none" stroke="#222" stroke-width="1.300"/><g fill="#d01818"><circle cx="2" cy="3" r="2"/><circle cx="16" cy="8" r="2"/><circle cx="22" cy="21" r="2"/></g></symbol>
    <symbol id="circ" viewBox="0 0 24 24"><circle cx="12" cy="12" r="11" fill="none" stroke="#222" stroke-width="1.300"/></symbol>
    <symbol id="fil" viewBox="0 0 24 24"><path d="M2 2h10q9 0 9 8v12" fill="none" stroke="#999" stroke-width="1.300"/><path d="M10 3q10 1 10 9" fill="none" stroke="#b88888"/></symbol>
    <symbol id="cham" viewBox="0 0 24 24"><path d="M2 2h9l10 9v11" fill="none" stroke="#b09090" stroke-width="1.300"/></symbol>
    <symbol id="rect" viewBox="0 0 24 24"><path d="M2 5h20v14H2z" fill="none" stroke="#222" stroke-width="1.300"/><circle cx="2" cy="5" r="2" fill="#d01818"/><circle cx="22" cy="19" r="2" fill="#d01818"/></symbol>
    <symbol id="spl" viewBox="0 0 24 24"><path d="M2 13 7 3M7 10l8 4M16 20l6-11M2 13l5-3M15 14l6-5" fill="none" stroke="#556" stroke-width="1.500"/><g fill="#808890"><circle cx="7" cy="3" r="2"/><circle cx="2" cy="13" r="2"/><circle cx="22" cy="9" r="2"/><circle cx="16" cy="21" r="2"/></g><circle cx="8" cy="10" r="2.500" fill="#d01818"/><circle cx="15" cy="14" r="2.500" fill="#d01818"/></symbol>
    <symbol id="plus" viewBox="0 0 24 24"><path d="M12 3v19M3 12h19" stroke="#222" stroke-width="1.500"/></symbol>
    <symbol id="offc" viewBox="0 0 24 24"><g fill="none" stroke="#909090" stroke-width="1.500"><path d="M1 22V9l5-7h10v5q7 2 7 8t-8 7z"/><path d="M6 18v-7l3-5h3v5q6 1 6 4t-5 3z"/></g></symbol>
    <symbol id="qt" viewBox="0 0 24 24"><path d="M1 12h21M6 1l8 21" stroke="#999" stroke-width="1.500"/><path d="M14 9l5-5 3 3-4 7z" fill="#98807c"/></symbol>
    <symbol id="qe" viewBox="0 0 24 24"><path d="M1 12h14M4 2l8 20L22 2" fill="none" stroke="#999" stroke-width="1.500"/><path d="M12 12l7-10 3 2-7 10z" fill="#909878"/></symbol>
    <symbol id="dim" viewBox="0 0 24 24"><path d="M1 8v11M22 8v11M1 13h21M5 10l-4 3 4 3M18 10l4 3-4 3M8 18l6-8" fill="none" stroke="#888" stroke-width="1.500"/><path d="M11 8l5-7 3 2-3 7z" fill="#909878"/></symbol>
    <symbol id="con1" viewBox="0 0 24 24"><path d="M1 11l8-8M5 12l8-8M10 20h12M16 9v11" stroke="#999" stroke-width="1.500"/></symbol>
    <symbol id="con2" viewBox="0 0 24 24"><path d="M2 22 10 9h12" fill="none" stroke="#999" stroke-width="1.500"/><circle cx="10" cy="9" r="2.500" fill="#907878"/></symbol>
    <symbol id="con3" viewBox="0 0 24 24"><circle cx="13" cy="15" r="7" fill="none" stroke="#999" stroke-width="1.500"/><path d="M2 5l15 13M2 18 19 2" stroke="#999" stroke-width="1.500"/></symbol>
    <symbol id="con4" viewBox="0 0 24 24"><path d="M0 6v10l5-5z" fill="#609060"/><path d="M9 12l7-9M14 12l8-10M10 23h10M15 13v10" stroke="#999" stroke-width="1.500"/></symbol>
  </svg>

  <header class="titlebar">
    <svg class="app-icon"><use href="#nx"/></svg>
    <h1>NX 8.5 - 建模 - [zhuangpeitu_UG7.5.prt （修改的） ]</h1>
    <span class="brand">SIEMENS</span>
    <div class="winbtns">
      <button aria-label="最小化"><svg viewBox="0 0 16 16"><path d="M3 12h7" stroke="#fff" stroke-width="3"/></svg></button>
      <button aria-label="最大化"><svg viewBox="0 0 16 16"><path d="M3 3h10v10H3zM3 4h10" fill="none" stroke="#fff" stroke-width="2"/></svg></button>
      <button class="close" aria-label="关闭"><svg viewBox="0 0 16 16"><path d="M3 3l10 10M13 3 3 13" stroke="#fff" stroke-width="2.500"/></svg></button>
    </div>
  </header>

  <div class="frame">
    <nav class="menubar">
      <span class="grip"></span>
      <svg class="app-icon"><use href="#part"/></svg>
      <ul>
        <li><a href="#">文件<kbd>(<u>F</u>)</kbd></a></li>
        <li><a href="#">编辑<kbd>(<u>E</u>)</kbd></a></li>
        <li><a href="#">视图<kbd>(<u>V</u>)</kbd></a></li>
        <li><a href="#">插入<kbd>(<u>S</u>)</kbd></a></li>
        <li><a href="#">格式<kbd>(<u>R</u>)</kbd></a></li>
        <li><a href="#">工具<kbd>(<u>T</u>)</kbd></a></li>
        <li><a href="#">装配<kbd>(<u>A</u>)</kbd></a></li>
        <li><a href="#">信息<kbd>(<u>I</u>)</kbd></a></li>
        <li><a href="#">分析<kbd>(<u>L</u>)</kbd></a></li>
        <li><a href="#">首选项<kbd>(<u>P</u>)</kbd></a></li>
        <li><a href="#">窗口<kbd>(<u>O</u>)</kbd></a></li>
        <li><a href="#"><kbd>GC </kbd>工具箱</a></li>
        <li><a href="#">帮助<kbd>(<u>H</u>)</kbd></a></li>
      </ul>
      <div class="docbtns">
        <button aria-label="最小化文档"><svg viewBox="0 0 16 16"><path d="M4 12h7" stroke="#555" stroke-width="2"/></svg></button>
        <button aria-label="还原文档"><svg viewBox="0 0 16 16"><path d="M6 6V4h7v6h-2M3 7h8v5H3z" fill="none" stroke="#555" stroke-width="1.500"/></svg></button>
        <button aria-label="关闭文档"><svg viewBox="0 0 16 16"><path d="M4 4l8 8M12 4l-8 8" stroke="#555" stroke-width="2.500"/></svg></button>
      </div>
    </nav>

    <div class="toolrow">
      <div class="toolbar">
        <span class="grip"></span>
        <button class="tool start"><svg><use href="#nx"/></svg>开始<i class="caret"></i></button>
        <button class="tool" aria-label="新建"><svg><use href="#new"/></svg></button>
        <button class="tool" aria-label="打开"><svg><use href="#open"/></svg></button>
        <button class="tool" aria-label="保存"><svg><use href="#save"/></svg></button>
        <span class="sep"></span>
        <button class="tool" aria-label="剪切"><svg><use href="#cut"/></svg></button>
        <button class="tool" aria-label="复制"><svg><use href="#copy"/></svg></button>
        <button class="tool" aria-label="粘贴"><svg><use href="#paste"/></svg></button>
        <button class="tool" aria-label="删除"><svg><use href="#del"/></svg></button>
        <span class="sep"></span>
        <button class="tool" aria-label="撤消"><svg><use href="#undo"/></svg></button>
        <button class="tool" aria-label="重做"><svg><use href="#redo"/></svg></button>
        <span class="sep"></span>
        <button class="tool finder"><svg><use href="#find"/></svg>命令查找器</button>
        <button class="tool" aria-label="重复命令"><svg><use href="#diam"/></svg></button>
        <button class="drop" aria-label="更多"></button>
        <button class="more" aria-label="工具条选项"></button>
      </div>
      <div class="toolbar">
        <span class="grip"></span>
        <button class="tool" aria-label="适合窗口"><svg><use href="#fit"/></svg></button>
        <button class="drop" aria-label="更多"></button>
        <button class="tool" aria-label="定向视图"><svg><use href="#wire"/></svg></button>
        <button class="drop" aria-label="更多"></button>
        <button class="tool" aria-label="着色"><svg><use href="#cb"/></svg></button>
        <button class="drop" aria-label="更多"></button>
        <button class="tool" aria-label="背景"><svg><use href="#box"/></svg></button>
        <button class="drop" aria-label="更多"></button>
        <span class="sep"></span>
        <button class="tool" aria-label="剖切"><svg><use href="#exit2"/></svg></button>
        <button class="tool" aria-label="编辑剖切"><svg><use href="#exit1"/></svg></button>
        <button class="more" aria-label="工具条选项"></button>
      </div>
      <div class="toolbar">
        <span class="grip"></span>
        <button class="tool" aria-label="对象显示"><svg><use href="#palette"/></svg></button>
        <span class="sep"></span>
        <button class="tool" aria-label="显示隐藏"><svg><use href="#play"/></svg></button>
        <button class="drop" aria-label="更多"></button>
        <span class="sep"></span>
        <button class="tool" aria-label="测量"><svg><use href="#meas"/></svg></button>
        <button class="drop" aria-label="更多"></button>
        <button class="tool" aria-label="测量距离"><svg><use href="#ruler"/></svg></button>
        <button class="more" aria-label="工具条选项"></button>
      </div>
    </div>

    <div class="toolrow tall">
      <div class="toolbar">
        <span class="grip"></span>
        <button class="big"><svg><use href="#plane"/></svg>基准平面</button>
        <button class="drop" aria-label="更多"></button>
        <button class="big"><svg><use href="#extr"/></svg>拉伸</button>
        <button class="drop" aria-label="更多"></button>
        <button class="big"><svg><use href="#hole"/></svg>孔</button>
        <button class="big"><svg><use href="#thread"/></svg>螺纹</button>
        <span class="sep"></span>
        <button class="big"><svg><use href="#array"/></svg>阵列特征</button>
        <button class="drop" aria-label="更多"></button>
        <button class="big"><svg><use href="#unite"/></svg>求和</button>
        <button class="drop" aria-label="更多"></button>
        <button class="big"><svg><use href="#trim"/></svg>修剪体</button>
        <button class="drop" aria-label="更多"></button>
        <button class="big"><svg><use href="#shell"/></svg>抽壳</button>
        <button class="more wide" aria-label="工具条选项">»</button>
      </div>
      <div class="toolbar">
        <span class="grip"></span>
        <button class="big"><svg><use href="#offset"/></svg>偏置区域</button>
        <button class="drop" aria-label="更多"></button>
        <button class="big"><svg><use href="#delface"/></svg>删除面</button>
        <button class="more" aria-label="工具条选项"></button>
      </div>
      <div class="toolbar">
        <span class="grip"></span>
        <button class="tool" aria-label="检查"><svg><use href="#pmi1"/></svg></button>
        <button class="tool" aria-label="属性"><svg><use href="#pmi2"/></svg></button>
        <button class="tool" aria-label="表格"><svg><use href="#pmi3"/></svg></button>
        <button class="tool" aria-label="坐标系"><svg><use href="#csys"/></svg></button>
        <button class="more" aria-label="工具条选项"></button>
      </div>
      <div class="toolbar last">
        <span class="grip"></span>
        <button class="big"><svg><use href="#ball"/></svg>真实着色</button>
        <button class="big" disabled><svg><use href="#ball2"/></svg>光亮金属<br>刷色</button>
        <button class="drop" aria-label="更多"></button>
        <button class="big" disabled><svg><use href="#ball3"/></svg>红色亮泽<br>塑料</button>
        <button class="drop" aria-label="更多"></button>
        <button class="more wide" aria-label="工具条选项">»</button>
      </div>
    </div>

    <div class="toolrow">
      <div class="toolbar">
        <span class="grip"></span>
        <button class="tool" aria-label="显示坐标"><svg><use href="#wcs"/></svg></button>
        <button class="tool" aria-label="图层"><svg><use href="#layers"/></svg></button>
        <button class="tool" aria-label="图层设置"><svg><use href="#layset"/></svg></button>
        <span class="sep"></span>
        <button class="tool" aria-label="标签"><svg><use href="#tag"/></svg></button>
        <span class="sep"></span>
        <button class="tool" aria-label="检查部件"><svg><use href="#chk1"/></svg></button>
        <button class="tool" aria-label="检查草图"><svg><use href="#chk2"/></svg></button>
        <button class="tool" aria-label="检查装配"><svg><use href="#chk3"/></svg></button>
        <span class="sep"></span>
        <button class="tool" aria-label="重命名"><svg viewBox="0 0 24 24"><use href="#cy" x="1" y="0" width="13" height="13"/><path d="M12 13l9-10 2 2-8 10z" fill="#f0b040" stroke="#704010"/><path d="M1 14h16v8H1z" fill="#fff" stroke="#101070"/><text x="2" y="21" class="abc">ABC</text><path d="M19 13v9l5-5z" fill="#9020a0"/></svg></button>
        <button class="more" aria-label="工具条选项"></button>
      </div>
      <div class="toolbar">
        <span class="grip"></span>
        <button class="tool" aria-label="折弯"><svg><use href="#bend1"/></svg></button>
        <button class="tool" aria-label="展平"><svg><use href="#bend2"/></svg></button>
        <button class="tool" aria-label="定位"><svg><use href="#hand"/></svg></button>
        <button class="more" aria-label="工具条选项"></button>
      </div>
      <div class="toolbar">
        <span class="grip"></span>
        <button class="tool" aria-label="压缩弹簧"><svg><use href="#spring1"/></svg></button>
        <button class="tool" aria-label="拉伸弹簧"><svg><use href="#spring2"/></svg></button>
        <button class="tool" aria-label="碟形弹簧"><svg><use href="#spring3"/></svg></button>
        <span class="sep"></span>
        <button class="tool" aria-label="删除弹簧"><svg><use href="#spring4"/></svg></button>
        <button class="more" aria-label="工具条选项"></button>
      </div>
      <div class="toolbar gap-l">
        <span class="grip"></span>
        <button class="tool" aria-label="三角"><svg><use href="#tri"/></svg></button>
        <button class="tool" aria-label="表"><svg><use href="#table"/></svg></button>
        <button class="tool" aria-label="点集"><svg><use href="#fold1"/></svg></button>
        <button class="tool" aria-label="圆集"><svg><use href="#fold2"/></svg></button>
        <button class="more" aria-label="工具条选项"></button>
      </div>
      <div class="toolbar gap-s">
        <span class="grip"></span>
        <button class="tool" aria-label="锁定"><svg><use href="#asm"/></svg></button>
        <button class="tool" aria-label="解锁"><svg><use href="#asm"/></svg></button>
        <button class="more" aria-label="工具条选项"></button>
      </div>
    </div>

    <div class="selbar">
      <div class="combo"><select aria-label="类型过滤器"><option>没有选择过滤器</option></select></div>
      <div class="combo scope"><select aria-label="选择范围"><option>整个装配</option></select></div>
      <button class="mini" aria-label="装配"><svg><use href="#s-asm"/></svg></button>
      <span class="sep"></span>
      <button class="mini" aria-label="重置过滤器"><svg><use href="#s-filt"/></svg></button>
      <button class="mini" aria-label="捕捉"><svg><use href="#s-snap"/></svg></button>
      <button class="mini" aria-label="查找"><svg><use href="#s-find"/></svg></button>
      <span class="sep"></span>
      <button class="mini" aria-label="实体"><svg><use href="#s-solid"/></svg></button>
      <button class="mini" aria-label="块"><svg><use href="#cb"/></svg></button>
      <span class="sep"></span>
      <button class="mini on" aria-label="终点"><svg><use href="#s-end"/></svg></button>
      <button class="mini on" aria-label="中点"><svg><use href="#s-mid"/></svg></button>
      <button class="mini" aria-label="控制点"><svg><use href="#s-ctl"/></svg></button>
      <button class="mini" aria-label="交点"><svg><use href="#s-int"/></svg></button>
      <button class="mini on" aria-label="圆心"><svg><use href="#s-cen"/></svg></button>
      <button class="mini" aria-label="象限点"><svg><use href="#s-quad"/></svg></button>
      <button class="mini on" aria-label="现有点"><svg><use href="#s-pt"/></svg></button>
      <button class="mini on" aria-label="曲线上的点"><svg><use href="#s-near"/></svg></button>
      <button class="mini" aria-label="面上的点"><svg><use href="#s-surf"/></svg></button>
      <span class="sep"></span>
      <button class="mini" aria-label="栅格点"><svg><use href="#s-grid"/></svg></button>
      <button class="more" aria-label="工具条选项"></button>
    </div>

    <div class="status">
      <span class="cue"></span>
      <strong class="msg">体<kbd>(4)</kbd> 已选定</strong>
      <span class="cell"></span>
      <span class="cell wide"></span>
      <span class="cell icons">
        <svg class="flag"><use href="#fin"/></svg>
        <svg viewBox="0 0 24 24"><path d="M1 6V1h5M18 1h5v5M23 18v5h-5M6 23H1v-5" fill="none" stroke="#333" stroke-width="2"/><path d="M5 5h14v13H5z" fill="#fff" stroke="#333" stroke-width="2"/><path d="M8 8h8v7H8z" fill="#3878d8"/></svg>
      </span>
    </div>

    <main class="work">
      <div class="tabs">
        <button aria-label="装配导航器"><svg><use href="#t-asm"/></svg></button>
        <button aria-label="约束导航器"><svg><use href="#mirror"/></svg></button>
        <button class="active" aria-label="部件导航器"><svg><use href="#t-part"/></svg></button>
        <button aria-label="重用库"><svg><use href="#t-books"/></svg></button>
        <button class="far" aria-label="HD3D 工具"><svg viewBox="0 0 24 24"><path d="M10 5q9 0 9 10M11 1q12 1 12 14" fill="none" stroke="#3870c0" stroke-width="2.500"/><circle cx="8" cy="16" r="7.500" fill="#1878d0"/><path d="M7 11h3v2H7zM6 15h4v5h1v1H6v-1h1v-4H6z" fill="#fff"/></svg></button>
        <button class="far" aria-label="浏览器"><svg><use href="#t-web"/></svg></button>
        <button class="far" aria-label="历史记录"><svg><use href="#t-clock"/></svg></button>
        <button aria-label="角色"><svg><use href="#t-role"/></svg></button>
        <button aria-label="可视化"><svg><use href="#t-rain"/></svg></button>
        <button aria-label="工艺"><svg><use href="#t-proc"/></svg></button>
        <button aria-label="用户"><svg><use href="#t-users"/></svg></button>
        <button aria-label="场景"><svg><use href="#t-show"/></svg></button>
      </div>

      <aside class="navigator">
        <h2><svg viewBox="0 0 12 12"><path d="M1 11 4 7" stroke="#222"/><path d="M3 6q1-4 5-5l3 3q0 4-4 5z" fill="#e8e070" stroke="#222" stroke-width="1.300"/></svg>部件导航器</h2>
        <div class="treebox">
          <div class="treehead"><span>名称</span><i></i></div>
          <div class="treemid">
            <ul class="tree">
              <li><label><input type="checkbox" checked><svg><use href="#n-body"/></svg><span>体<kbd> (1)</kbd></span></label></li>
              <li><label><input type="checkbox" checked><svg><use href="#n-body"/></svg><span>体<kbd> (2)</kbd></span></label></li>
              <li><label><input type="checkbox" checked><svg><use href="#n-body"/></svg><span>体<kbd> (3)</kbd></span></label></li>
              <li class="selected"><label><input type="checkbox" checked><svg><use href="#n-body"/></svg><span>体<kbd> (4)</kbd></span></label></li>
              <li><label><input type="checkbox" checked><svg><use href="#n-body"/></svg><span>体<kbd> (5)</kbd></span></label></li>
              <li><label><input type="checkbox" checked><svg><use href="#n-body"/></svg><span>体<kbd> (6)</kbd></span></label></li>
              <li><label><input type="checkbox" checked><svg><use href="#n-body"/></svg><span>体<kbd> (7)</kbd></span></label></li>
              <li><label><input type="checkbox" checked><svg><use href="#n-body"/></svg><span>体<kbd> (8)</kbd></span></label></li>
              <li><label><input type="checkbox" checked><svg><use href="#n-body"/></svg><span>体<kbd> (9)</kbd></span></label></li>
              <li><label><input type="checkbox" checked><svg><use href="#n-body"/></svg><span>体<kbd> (10)</kbd></span></label></li>
              <li><label><input type="checkbox" checked><svg><use href="#n-body"/></svg><span>体<kbd> (11)</kbd></span></label></li>
              <li><label><input type="checkbox" checked><svg><use href="#cb"/></svg><span>块<kbd> (12)</kbd></span></label></li>
              <li><label><input type="checkbox" checked><svg><use href="#cb"/></svg><span>块<kbd> (13)</kbd></span></label></li>
              <li><label><input type="checkbox" checked><svg><use href="#cb"/></svg><span>块<kbd> (14)</kbd></span></label></li>
              <li><label><input type="checkbox" checked><svg><use href="#sub"/></svg><span>求差<kbd> (15)</kbd></span></label></li>
              <li><label><input type="checkbox" checked><svg><use href="#sub"/></svg><span>求差<kbd> (16)</kbd></span></label></li>
              <li><label><input type="checkbox" checked><svg><use href="#n-cyl"/></svg><span>圆柱<kbd> (17)</kbd></span></label></li>
              <li><label><input type="checkbox" checked><svg><use href="#n-cyl"/></svg><span>圆柱<kbd> (18)</kbd></span></label></li>
              <li><label><input type="checkbox" checked><svg><use href="#unite"/></svg><span>求和<kbd> (19)</kbd></span></label></li>
              <li><label><input type="checkbox" checked><svg><use href="#n-cyl"/></svg><span>圆柱<kbd> (20)</kbd></span></label></li>
              <li><label><input type="checkbox" checked><svg><use href="#n-cyl"/></svg><span>圆柱<kbd> (21)</kbd></span></label></li>
              <li><label><input type="checkbox" checked><svg><use href="#n-cyl"/></svg><span>圆柱<kbd> (22)</kbd></span></label></li>
              <li><label><input type="checkbox" checked><svg><use href="#unite"/></svg><span>求和<kbd> (23)</kbd></span></label></li>
              <li><label><input type="checkbox" checked><svg><use href="#sub"/></svg><span>求差<kbd> (24)</kbd></span></label></li>
              <li><label><input type="checkbox" checked><svg><use href="#n-blend"/></svg><span>边倒圆<kbd> (25)</kbd></span></label></li>
            </ul>
            <div class="vscroll">
              <button class="up" aria-label="向上滚动"></button>
              <div class="thumb"></div>
              <button class="down" aria-label="向下滚动"></button>
            </div>
          </div>
          <div class="hscroll">
            <button class="left" aria-label="向左滚动"></button>
            <div class="thumb"></div>
            <button class="right" aria-label="向右滚动"></button>
          </div>
        </div>
        <div class="splitter"><i></i></div>
      </aside>

      <section class="viewport">
        <svg viewBox="229 235 957 589" role="img" aria-label="模具装配模型">
          <defs>
            <linearGradient id="mBlueL" x2="1" y2="1"><stop stop-color="#6c98c0"/><stop offset="1" stop-color="#54799c"/></linearGradient>
            <linearGradient id="mBlueR"><stop stop-color="#4f86ba"/><stop offset="1" stop-color="#86b2da"/></linearGradient>
            <linearGradient id="mPost"><stop stop-color="#62406e"/><stop offset=".4" stop-color="#9c6c90"/><stop offset=".7" stop-color="#76507e"/><stop offset="1" stop-color="#553258"/></linearGradient>
            <linearGradient id="mGold"><stop stop-color="#8c5c18"/><stop offset=".4" stop-color="#d49c38"/><stop offset="1" stop-color="#946018"/></linearGradient>
            <linearGradient id="mCop"><stop stop-color="#8c4828"/><stop offset=".4" stop-color="#e08c54"/><stop offset="1" stop-color="#984c28"/></linearGradient>
            <g id="screw"><ellipse rx="13" ry="8" fill="#000"/><ellipse rx="10.500" ry="6" fill="#18e818"/><ellipse rx="7.500" ry="5" fill="#063806"/><path d="M-4-2 0-3l4 1v4l-4 1-4-1z" fill="#128a12"/></g>
            <g id="post"><path d="M-17 12v8a17 9 0 0 0 34 0v-8z" fill="#76445c" stroke="#3c1c34"/><ellipse cy="12" rx="17" ry="9" fill="#8c5874" stroke="#3c1c34"/><path d="M-14-45v55a14 6 0 0 0 28 0v-55z" fill="url(#mPost)"/><path d="M-8-45v58M-2-45v60M6-45v59" stroke="#54489c" stroke-opacity=".6"/></g>
            <g id="coil"><path d="M-16 0v24a16 7 0 0 0 32 0V0z" fill="#9c5068"/><path d="M-16 5a16 7 0 0 0 32 0M-16 10a16 7 0 0 0 32 0M-16 15a16 7 0 0 0 32 0M-16 20a16 7 0 0 0 32 0M-16 25a16 7 0 0 0 32 0" fill="none" stroke="#542038" stroke-width="1.500"/><ellipse rx="17" ry="8" fill="#8c54a4" stroke="#441c38" stroke-width="1.500"/><ellipse rx="10" ry="4.500" fill="#5c2c4c"/><path d="M-8-24V0a8 4 0 0 0 16 0v-24z" fill="url(#mGold)"/></g>
            <g id="pin"><ellipse cy="29" rx="9" ry="5" fill="#8c4438" stroke="#582020"/><path d="M-7 0v28a7 4 0 0 0 14 0V0z" fill="url(#mCop)"/><ellipse rx="7.500" ry="4" fill="#e89c60" stroke="#743424" stroke-width="1.500"/></g>
            <g id="bspring"><path d="M-15 0h30v24a15 6 0 0 1-30 0z" fill="#060644"/><path d="M-15 5a15 5 0 0 0 30 0M-15 10a15 5 0 0 0 30 0M-15 15a15 5 0 0 0 30 0M-15 20a15 5 0 0 0 30 0M-15 25a15 5 0 0 0 30 0" fill="none" stroke="#2c34e0" stroke-width="1.500"/></g>
            <clipPath id="cPink"><path d="M441 450 628 558 815 451V507L628 615 441 507z"/></clipPath>
            <clipPath id="cOpen"><path d="M477 529 592 595V664L477 598z"/></clipPath>
            <clipPath id="cRing"><ellipse cx="628" cy="367" rx="37" ry="21"/></clipPath>
          </defs>

          <!-- base plate -->
          <path d="M422 566 441 555 815 577 833 588 647 695z" fill="#fff" stroke="#000"/>
          <path d="M422 566 647 695V716L422 587z" fill="#a6a6a6"/>
          <path d="M647 695 833 588V609L647 716z" fill="#b8b8b8"/>
          <path d="M422 566 647 695 833 588M647 695V716" fill="none" stroke="#000" stroke-width="1.300"/>

          <!-- ejector space -->
          <path d="M477 529 592 595V664L477 598z" fill="#fff"/>
          <g clip-path="url(#cOpen)">
            <path d="M477 529 497 540V552L477 563z" fill="#c4c8c4"/>
            <path d="M479 563 497 553" stroke="#000"/>
            <use href="#bspring" x="511" y="539"/>
            <use href="#bspring" x="593" y="585"/>
            <ellipse cx="493" cy="563" rx="4" ry="2.500" fill="#1c20b0"/>
            <ellipse cx="523" cy="564" rx="4" ry="3" fill="#080850"/>
            <path d="M581 621l9-3v8z" fill="#222"/>
            <path d="M479 563 591 627V640L479 577z" fill="#7c848e" stroke="#000"/>
            <path d="M479 577 591 640V658L479 595z" fill="#a48c94" stroke="#000"/>
          </g>
          <path d="M478 529V598M591 627V662" stroke="#000" stroke-width="2"/>

          <!-- spacer blocks -->
          <path d="M441 507 477 528V597L440 575z" fill="#a8aaa8" stroke="#000"/>
          <path d="M592 594 628 615V684L592 663z" fill="#acaeac" stroke="#000"/>
          <path d="M628 615 815 507V577L628 684z" fill="#bcbcbc" stroke="#000" stroke-width="1.300"/>

          <!-- transparent cavity plate -->
          <g clip-path="url(#cPink)">
            <path d="M441 450 628 558 815 451V507L628 615 441 507z" fill="#cc8e8e"/>
            <path d="M441 507 480 485 628 576 780 488 815 507 628 615z" fill="#d89c9c"/>
            <path d="M441 450V507L490 479z" fill="#7c3c3c"/>
            <path d="M815 451V507L768 480z" fill="#7c3c3c"/>
            <path d="M478 527 500 514M592 594 628 574M643 566 710 529M726 518 758 500" stroke="#5c2424" stroke-width="1.300"/>
            <path d="M695 520 740 545M663 535 705 560" stroke="#a85c5c"/>
            <use href="#post" x="482" y="492"/>
            <use href="#post" x="774" y="494"/>
            <use href="#post" x="630" y="577"/>
            <path d="M529 526 548 516 556 530 540 541z" fill="#dca0a0"/>
            <ellipse cx="553" cy="522" rx="6" ry="8" fill="#b87070" stroke="#702c2c" transform="rotate(-20 553 522)"/>
            <use href="#coil" x="511" y="509"/>
            <use href="#coil" x="594" y="557"/>
            <path d="M691 546 699 537 714 546 708 560zM714 532 722 525 737 533 731 547z" fill="#d8a4a4" stroke="#8c5050"/>
            <use href="#pin" x="663" y="547"/>
            <use href="#pin" x="744" y="500"/>
          </g>
          <ellipse cx="534" cy="533" rx="5" ry="8" fill="#f4dcdc" stroke="#000" stroke-width="1.500" transform="rotate(-20 534 533)"/>
          <ellipse cx="710" cy="554" rx="5" ry="7" fill="#6c7468" stroke="#000" stroke-width="1.300" transform="rotate(15 710 554)"/>
          <ellipse cx="733" cy="541" rx="5" ry="7" fill="#6c7468" stroke="#000" stroke-width="1.300" transform="rotate(15 733 541)"/>
          <path d="M441 507 628 615 815 507M628 558V684" fill="none" stroke="#000" stroke-width="1.300"/>

          <!-- blue plate -->
          <path d="M441 398 628 500V558L441 450z" fill="url(#mBlueL)"/>
          <path d="M628 500 815 418V451L628 558z" fill="url(#mBlueR)"/>
          <path d="M441 450 628 558 815 451M628 500V558" fill="none" stroke="#000" stroke-width="2"/>
          <ellipse cx="534" cy="478" rx="5" ry="8" fill="#c4e8fc" stroke="#000" stroke-width="1.500" transform="rotate(-25 534 478)"/>

          <!-- clamping plate -->
          <path d="M609 258 833 387 647 494 422 365z" fill="#fff"/>
          <path d="M422 365 647 494V516L422 387z" fill="#a4a4a4"/>
          <path d="M647 494 833 387V409L647 516z" fill="#c0c0c0"/>
          <path d="M422 365 647 494 833 387M647 494V516L422 387M647 516 833 409" fill="none" stroke="#000" stroke-width="1.500"/>
          <use href="#screw" x="593" y="309"/>
          <use href="#screw" x="512" y="356"/>
          <use href="#screw" x="744" y="396"/>
          <use href="#screw" x="662" y="443"/>

          <!-- locating ring -->
          <path d="M575 368v8a53 31 0 0 0 106 0v-8z" fill="#087858" stroke="#000" stroke-width="1.500"/>
          <ellipse cx="628" cy="367" rx="53" ry="30" fill="#10bc90" stroke="#000" stroke-width="1.500"/>
          <ellipse cx="628" cy="367" rx="38" ry="22" fill="#086c50"/>
          <g clip-path="url(#cRing)">
            <ellipse cx="628" cy="380" rx="37" ry="21" fill="#fff" stroke="#000"/>
            <ellipse cx="629" cy="389" rx="20" ry="9" fill="#a8cc30" stroke="#000" stroke-width="1.500"/>
            <ellipse cx="615" cy="386" rx="6" ry="3" fill="#022"/>
          </g>
          <ellipse cx="628" cy="367" rx="38" ry="22" fill="none" stroke="#000" stroke-width="2"/>
          <ellipse cx="596" cy="349" rx="6" ry="4" fill="#022"/>
          <ellipse cx="660" cy="386" rx="6" ry="4" fill="#022"/>

          <!-- selected body -->
          <path d="M575 450 593 438 612 451 607 461 602 463 599 469 590 467 590 459 583 456 581 463 575 460z" fill="#ff9c3c"/>
          <path d="M583 455 590 452 591 459zM597 460l2-3v6zM596 448l3-2v3z" fill="#fff"/>

          <!-- work coordinate system -->
          <path d="M628 447 625 415 628 404 631 415z" fill="#3850b0"/>
          <path d="M632 448 649 433 668 427 652 440z" fill="#98c898"/>
          <path d="M632 452 652 460 667 472 650 467z" fill="#cc7478"/>
          <text x="632" y="403" fill="#0860e8">ZC</text>
          <text x="653" y="423" fill="#2c8c30">YC</text>
          <text x="652" y="485" fill="#d83030">XC</text>
          <path d="M638 688l7-3 4 3 6-3M640 692l8-3 7 2" fill="none" stroke="#000" stroke-width="2"/>

          <!-- view triad -->
          <path d="M280 754 293 745 309 752V769L296 778 280 771z" fill="#b0b0b0"/>
          <path d="M280 754 294 762 309 752M294 762V778" fill="none" stroke="#ccc"/>
          <path d="M278 768V752" stroke="#0c3cd0" stroke-width="2"/>
          <path d="M275 753 278 743 282 753z" fill="#0c3cd0"/>
          <path d="M280 771 296 779" stroke="#b02430" stroke-width="3"/>
          <path d="M295 777 304 784 297 783z" fill="#c82c38"/>
          <path d="M279 770 308 752" stroke="#90b090" stroke-dasharray="2 2"/>
          <circle cx="279" cy="771" r="4" fill="#ddd"/>
          <text x="275" y="744" fill="#1048e0">Z</text>
          <text x="303" y="791" fill="#d83838">X</text>
        </svg>
      </section>
    </main>

    <footer class="bottom">
      <div class="toolrow">
        <div class="toolbar">
          <span class="grip"></span>
          <button class="tool" aria-label="查找组件" disabled><svg><use href="#dis"/></svg></button>
          <button class="tool" aria-label="添加组件"><svg><use href="#addc"/></svg></button>
          <button class="tool" aria-label="移动组件"><svg><use href="#movec"/></svg></button>
          <button class="tool" aria-label="镜像装配"><svg><use href="#mirror"/></svg></button>
          <span class="sep"></span>
          <button class="tool" aria-label="爆炸图"><svg><use href="#cubes"/></svg></button>
          <button class="more" aria-label="工具条选项"></button>
        </div>
      </div>
      <div class="toolrow">
        <div class="toolbar indent">
          <span class="grip"></span>
          <button class="tool" aria-label="任务环境草图"><svg><use href="#sk"/></svg></button>
          <button class="tool finish" disabled><svg><use href="#fin"/></svg>完成草图</button>
          <button class="tool" aria-label="轮廓"><svg><use href="#prof"/></svg></button>
          <button class="tool" aria-label="直线"><svg><use href="#line"/></svg></button>
          <button class="tool" aria-label="圆弧"><svg><use href="#arc"/></svg></button>
          <button class="tool" aria-label="圆"><svg><use href="#circ"/></svg></button>
          <button class="tool" aria-label="圆角"><svg><use href="#fil"/></svg></button>
          <button class="tool" aria-label="倒斜角"><svg><use href="#cham"/></svg></button>
          <button class="tool" aria-label="矩形"><svg><use href="#rect"/></svg></button>
          <button class="tool" aria-label="艺术样条"><svg><use href="#spl"/></svg></button>
          <button class="tool" aria-label="点"><svg><use href="#plus"/></svg></button>
          <button class="tool" aria-label="偏置曲线"><svg><use href="#offc"/></svg></button>
          <button class="drop" aria-label="更多"></button>
          <span class="sep"></span>
          <button class="tool" aria-label="快速修剪"><svg><use href="#qt"/></svg></button>
          <button class="tool" aria-label="快速延伸"><svg><use href="#qe"/></svg></button>
          <span class="sep"></span>
          <button class="tool" aria-label="自动尺寸"><svg><use href="#dim"/></svg></button>
          <button class="drop" aria-label="更多"></button>
          <span class="sep"></span>
          <button class="tool" aria-label="约束"><svg><use href="#con1"/></svg></button>
          <button class="tool" aria-label="设为对称"><svg><use href="#con2"/></svg></button>
          <button class="drop" aria-label="更多"></button>
          <button class="tool" aria-label="显示约束"><svg><use href="#con3"/></svg></button>
          <button class="tool" aria-label="自动约束"><svg><use href="#con4"/></svg></button>
          <button class="drop" aria-label="更多"></button>
          <button class="more" aria-label="工具条选项"></button>
        </div>
      </div>
    </footer>
  </div>

  <!-- input method bar -->
  <div class="ime">
    <div class="avatar"><svg viewBox="0 0 38 38"><path d="M5 38q-2-8 5-12-2-20 9-22 11 2 9 22 7 4 5 12z" fill="#c8d0dc" stroke="#b0bac8"/><ellipse cx="19" cy="16" rx="7" ry="9" fill="#e0e6ec" stroke="#b0bac8"/><path d="M12 12q6-6 14 0M12 38q2-9 7-9t7 9" fill="none" stroke="#a8b2c0" stroke-width="2"/></svg></div>
    <div class="imebar">
      <button>中</button>
      <button aria-label="半角"><svg viewBox="0 0 14 14"><path d="M8 1q5 1 5 6t-6 6q-4 0-6-3 8 1 7-9z" fill="#1878e0"/></svg></button>
      <button aria-label="中文标点"><svg viewBox="0 0 14 14"><circle cx="4" cy="7" r="2" fill="none" stroke="#1878e0"/><path d="M10 5h2v3l-2 2" fill="none" stroke="#1878e0" stroke-width="2"/></svg></button>
      <button aria-label="设置"><svg viewBox="0 0 14 14"><path d="M1 12 8 6" stroke="#1878e0" stroke-width="3"/><path d="M7 6V2l4-2-1 4 2 1 2-2-1 5-5 1z" fill="#1878e0"/></svg></button>
      <button aria-label="菜单"><svg viewBox="0 0 14 14"><path d="M1 3h12v11H1zM4 1h6v3H4zM5 8h8M5 11h8" fill="none" stroke="#1878e0" stroke-width="2"/></svg></button>
    </div>
  </div>
</body>
</html>
```
FILE: styles.css
```css
* {
  box-sizing: border-box;
}
body {
  margin: 0;
  min-height: 100vh;
  display: flex;
  flex-direction: column;
  position: relative;
  overflow: hidden;
  background: #0c0c0c;
  color: #000;
  font-family: "Liberation Sans", "Noto Sans CJK SC", sans-serif;
  font-size: 12px;
  line-height: 14px;
}
button {
  border: 0;
  padding: 0;
  margin: 0;
  background: none;
  font: inherit;
  color: inherit;
}
ul {
  list-style: none;
  margin: 0;
  padding: 0;
}
a {
  color: inherit;
  text-decoration: none;
}
kbd {
  font-family: "Liberation Mono", monospace;
  font-size: 10px;
  white-space: pre;
}
svg {
  display: block;
  flex: none;
}
.sprite {
  position: absolute;
  width: 0;
  height: 0;
}

/* title bar */
.titlebar {
  height: 30px;
  flex: none;
  display: flex;
  align-items: center;
  padding: 0 4px 1px 6px;
  background: linear-gradient(#222 0, #77777c 3px, #55555a 9px, #1c1c1c 10px, #161616 100%);
  color: #fff;
}
.app-icon {
  width: 16px;
  height: 16px;
}
.titlebar h1 {
  margin: 0 auto 0 5px;
  font-family: Inter, "Noto Sans CJK SC", sans-serif;
  font-size: 12px;
  font-weight: normal;
}
.brand {
  font-family: "Open Sans", sans-serif;
  font-size: 13px;
  font-weight: 800;
  margin-right: 28px;
}
.winbtns, .docbtns {
  display: flex;
  gap: 4px;
}
.winbtns button {
  width: 18px;
  height: 18px;
  padding: 1px;
  border-radius: 3px;
  border: 1px solid #555;
  background: linear-gradient(#777, #2c2c2c);
}
.winbtns .close {
  background: linear-gradient(#f08868, #d83818);
  border-color: #b85038;
}

.frame {
  flex: 1;
  display: flex;
  flex-direction: column;
  margin: 0 4px 8px;
  background: #dcdcdc;
}

/* menu bar */
.menubar {
  height: 24px;
  display: flex;
  align-items: center;
  background: #e2e2e2;
  padding-right: 5px;
}
.menubar ul {
  display: flex;
  gap: 13px;
  margin: 0 auto 0 5px;
}
.menubar li {
  white-space: nowrap;
  line-height: 16px;
}
.docbtns {
  gap: 3px;
}
.docbtns button {
  width: 16px;
  height: 16px;
  border: 1px solid #666;
  border-radius: 3px;
  background: #f2f2f2;
}

/* toolbars */
.toolrow {
  display: flex;
  height: 34px;
  background: linear-gradient(#e2e2e2, #d2d2d2);
  border-top: 1px solid #f6f6f6;
}
.toolrow.tall {
  height: 62px;
}
.toolbar {
  display: flex;
  align-items: center;
  padding-right: 2px;
  border-right: 1px solid #b8b8b8;
  box-shadow: 1px 0 #f6f6f6;
}
.toolbar.last {
  flex: 1;
  border: 0;
  box-shadow: none;
}
.gap-l {
  margin-left: 93px;
  border-left: 1px solid #f6f6f6;
}
.gap-s {
  margin-left: 31px;
  border-left: 1px solid #f6f6f6;
}
.indent {
  margin-left: 150px;
  border-left: 1px solid #f6f6f6;
}
.grip {
  flex: none;
  width: 3px;
  align-self: stretch;
  margin: 5px 1px 5px 4px;
  background: repeating-linear-gradient(#aaa 0 2px, #f0f0f0 2px 4px);
}
.sep {
  flex: none;
  width: 2px;
  align-self: stretch;
  margin: 1px 2px;
  background: linear-gradient(90deg, #b4b4b4 50%, #fafafa 50%);
}
.tool {
  flex: none;
  width: 31px;
  height: 32px;
  display: flex;
  align-items: center;
  justify-content: center;
}
.tool svg {
  width: 22px;
  height: 22px;
}
.tool.start {
  width: 67px;
  gap: 3px;
}
.tool.finder {
  width: 96px;
  gap: 3px;
}
.tool.finish {
  width: 82px;
  color: #909090;
}
.tool.finish svg {
  width: 24px;
  height: 24px;
  margin-right: 3px;
}
.abc {
  font-family: "Liberation Sans", sans-serif;
  font-size: 7px;
  font-weight: bold;
}
.caret, .drop::after, .more::after {
  content: "";
  border: 3px solid transparent;
  border-top-color: #000;
  border-bottom: 0;
}
.drop {
  flex: none;
  width: 12px;
  display: flex;
  align-items: center;
  justify-content: center;
}
.more {
  flex: none;
  width: 11px;
  align-self: stretch;
  display: flex;
  align-items: flex-end;
  justify-content: center;
  padding-bottom: 7px;
}
.more.wide {
  width: 14px;
  flex-direction: column;
  align-items: center;
  justify-content: space-between;
  margin-left: 30px;
  font-size: 16px;
  font-weight: bold;
  line-height: 14px;
}
.last .more.wide {
  margin-left: auto;
}
.big {
  flex: none;
  width: 60px;
  align-self: stretch;
  display: flex;
  flex-direction: column;
  align-items: center;
  padding-top: 5px;
  line-height: 12px;
}
.big svg {
  width: 22px;
  height: 22px;
  margin-bottom: 6px;
}
button:disabled {
  color: #949494;
}

/* selection bar */
.selbar {
  height: 27px;
  display: flex;
  align-items: center;
  padding: 0 3px 0 5px;
  border-top: 2px solid #aaa;
  background: linear-gradient(#d0d0d0, #e0e0e0);
}
.selbar .more {
  margin-left: auto;
}
.combo {
  position: relative;
  width: 110px;
  height: 17px;
  margin-right: 8px;
}
.combo.scope {
  width: 116px;
  margin-right: 4px;
}
.combo select {
  appearance: none;
  width: 100%;
  height: 100%;
  border: 1px solid #3c5068;
  border-radius: 2px;
  background: #fff;
  color: #000;
  padding: 0 17px 0 1px;
  font: inherit;
  line-height: 15px;
}
.combo::before, .combo::after {
  content: "";
  position: absolute;
  right: 1px;
  top: 1px;
  width: 16px;
  height: 15px;
  pointer-events: none;
}
.combo::before {
  background: linear-gradient(#d4e4f8, #6c9cd0);
  border-left: 1px solid #3c5068;
}
.combo::after {
  background: #111c30;
  clip-path: polygon(3px 4px, 14px 4px, 9px 11px);
}
.mini {
  flex: none;
  width: 23px;
  height: 23px;
  display: flex;
  align-items: center;
  justify-content: center;
}
.mini svg {
  width: 17px;
  height: 17px;
}
.mini.on {
  background: #fff;
  border: 1px solid #555;
  border-radius: 2px;
}

/* status line */
.status {
  height: 24px;
  display: grid;
  grid-template-columns: 541px 1fr 20px 36px 42px;
  border-top: 1px solid #f8f8f8;
  border-bottom: 1px solid #aaa;
  background: #e2e2e2;
}
.status .msg {
  border-left: 1px solid #f8f8f8;
  padding-left: 3px;
  font-size: 13px;
  line-height: 22px;
}
.status .msg kbd {
  font-size: 12px;
}
.cell {
  border-left: 1px solid #b8b8b8;
  box-shadow: inset 1px 0 #fafafa;
}
.cell.icons {
  display: flex;
  align-items: center;
  gap: 5px;
  padding-left: 2px;
}
.cell.icons svg {
  width: 14px;
  height: 14px;
}
.cell.icons .flag {
  width: 16px;
  height: 16px;
}

/* work area */
.work {
  flex: 1;
  min-height: 589px;
  display: flex;
  background: #000;
}
.tabs {
  width: 33px;
  flex: none;
  padding: 17px 0 0 6px;
  display: flex;
  flex-direction: column;
  gap: 2px;
  background: linear-gradient(90deg, #8c8c8c, #b0b0b0);
  border-right: 1px solid #888;
}
.tabs button {
  height: 40px;
  display: flex;
  align-items: center;
  justify-content: center;
  background: #dadada;
  border: 1px solid #666;
  border-right: 0;
  border-radius: 4px 0 0 4px;
}
.tabs button.active {
  background: #eee;
  margin-right: -1px;
}
.tabs button.far {
  margin-top: 12px;
}
.tabs svg {
  width: 22px;
  height: 22px;
}
.navigator {
  width: 192px;
  flex: none;
  display: flex;
  flex-direction: column;
  background: #eee;
  border-right: 1px solid #888;
  padding: 0 11px 10px 9px;
}
.navigator h2 {
  display: flex;
  align-items: center;
  gap: 14px;
  margin: 0;
  padding-left: 5px;
  height: 30px;
  font-size: 13px;
}
.navigator h2 svg {
  width: 11px;
  height: 11px;
}
.treebox {
  flex: 1;
  border: 1px solid #666;
  display: flex;
  flex-direction: column;
  background: #eee;
}
.treehead {
  height: 17px;
  display: flex;
  align-items: center;
  gap: 16px;
  padding-left: 6px;
  background: linear-gradient(90deg, transparent 152px, #b4b4b4 152px), linear-gradient(#f2f2f2, #d0d0d0);
  border-bottom: 1px solid #888;
}
.treehead i {
  border: 5px solid transparent;
  border-bottom: 6px solid #111;
  border-top: 0;
}
.treemid {
  flex: 1;
  display: flex;
}
.tree {
  flex: 1;
  background: #fff;
}
.tree li {
  height: 20px;
  padding-left: 30px;
  border-bottom: 1px solid #ccc;
}
.tree li:nth-child(even) {
  background: #f1f1f1;
}
.tree label {
  display: flex;
  align-items: center;
  height: 19px;
  padding-left: 11px;
  border-left: 1px dotted #888;
  background: linear-gradient(90deg, #999 50%, transparent 50%) 1px 10px / 2px 1px repeat-x;
}
.tree input {
  appearance: none;
  flex: none;
  width: 12px;
  height: 12px;
  margin: 0 3px 0 -1px;
  border: 1px solid #000;
  background: #fff;
}
.tree input:checked::after {
  content: "";
  display: block;
  width: 10px;
  height: 10px;
  background: #18b020;
  clip-path: polygon(0 45%, 20% 30%, 40% 55%, 80% 5%, 100% 15%, 45% 100%, 30% 100%);
}
.tree svg {
  width: 15px;
  height: 15px;
  background: #fff;
}
.tree span {
  flex: 1;
  align-self: stretch;
  padding-left: 3px;
  line-height: 20px;
  white-space: nowrap;
  background: #fff;
  color: #222;
}
.tree li:nth-child(even) span, .tree li:nth-child(even) svg {
  background: #f1f1f1;
}
.tree li.selected span {
  background: #2c8cec;
  color: #fff;
}
.vscroll {
  width: 17px;
  flex: none;
  display: flex;
  flex-direction: column;
}
.vscroll .thumb {
  height: 15px;
  margin: 0 2px 0 1px;
  border: 1px solid #888;
  background: linear-gradient(90deg, #f4f4f4, #ccc);
}
.vscroll button, .hscroll button {
  width: 17px;
  height: 18px;
  display: flex;
  align-items: center;
  justify-content: center;
}
.vscroll .up {
  height: 23px;
}
.vscroll .down {
  margin-top: auto;
}
.vscroll button::after, .hscroll button::after {
  content: "";
  border: 3px solid transparent;
}
.vscroll .up::after {
  border-bottom-color: #333;
  border-top: 0;
}
.vscroll .down::after {
  border-top-color: #333;
  border-bottom: 0;
}
.hscroll {
  display: flex;
  align-items: center;
  height: 18px;
  padding-right: 17px;
  border-top: 1px solid #ccc;
}
.hscroll .thumb {
  width: 57px;
  height: 14px;
  margin: 0 auto 0 2px;
  border: 1px solid #888;
  background: repeating-linear-gradient(90deg, #555 0 1px, transparent 1px 3px) 23px 3px / 8px 6px no-repeat, linear-gradient(#f6f6f6, #c4c4c4);
}
.hscroll .left::after {
  border-right-color: #222;
  border-left: 0;
}
.hscroll .right::after {
  border-left-color: #222;
  border-right: 0;
}
.splitter {
  height: 8px;
  display: flex;
  align-items: flex-end;
  justify-content: center;
}
.splitter i {
  width: 28px;
  height: 5px;
  background: #d0d0d0;
  border-bottom: 1px solid #888;
}
.viewport {
  flex: 1;
  min-width: 0;
  display: flex;
}
.viewport svg {
  width: 100%;
  height: 100%;
}
.viewport text {
  font-family: "Liberation Sans", sans-serif;
  font-size: 12px;
}

/* bottom toolbars */
.bottom .toolrow {
  background: #dedede;
}
.bottom .toolrow + .toolrow {
  background: #d4d4d4;
}

/* input method bar */
.ime {
  position: absolute;
  right: 0;
  bottom: 0;
  display: flex;
  align-items: flex-end;
}
.avatar {
  width: 40px;
  height: 34px;
  overflow: hidden;
  border: 2px solid #1e86f0;
  border-bottom: 0;
  background: #dce4ee;
}
.avatar svg {
  width: 36px;
  height: 36px;
}
.imebar {
  width: 98px;
  height: 19px;
  overflow: hidden;
  display: flex;
  align-items: center;
  gap: 7px;
  padding: 3px 0 0 4px;
  border-top: 2px solid #1e86f0;
  background: #fff;
  color: #1878e0;
}
.imebar button {
  flex: none;
  font-size: 13px;
  font-weight: bold;
}
.imebar svg {
  width: 14px;
  height: 14px;
}
```
